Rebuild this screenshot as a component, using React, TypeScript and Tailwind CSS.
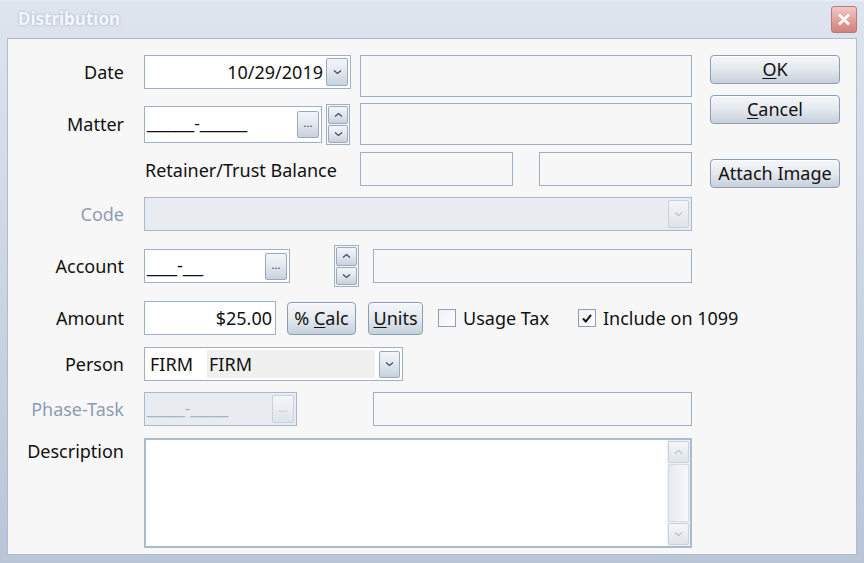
import React from "react";

const font = { fontFamily: '"Noto Sans", "Open Sans", sans-serif' };
const maskFont = { fontFamily: '"Liberation Sans", Arial, sans-serif' };

function Chevron({ dir = "down", muted = false }: { dir?: "down" | "up"; muted?: boolean }) {
  return (
    <svg width="9" height="6" viewBox="0 0 9 6" className="block">
      <path
        d={dir === "down" ? "M1 1.5 L4.5 4.5 L8 1.5" : "M1 4.5 L4.5 1.5 L8 4.5"}
        fill="none"
        stroke={muted ? "#b8c2d0" : "#3a4658"}
        strokeWidth="1.1"
      />
    </svg>
  );
}

function SmallButton({ children, muted = false, className = "" }: { children: React.ReactNode; muted?: boolean; className?: string }) {
  return (
    <div
      className={`flex items-center justify-center rounded-[2px] border ${
        muted ? "border-[#c9d1dc] bg-gradient-to-b from-[#f4f6f8] to-[#dfe4ea]" : "border-[#9aa9be] bg-gradient-to-b from-[#f3f5f8] via-[#e2e7ee] to-[#c8d1dd]"
      } ${className}`}
    >
      {children}
    </div>
  );
}

function Dots({ muted = false }: { muted?: boolean }) {
  return <span className={`text-[11px] leading-none -mt-1 ${muted ? "text-[#b0b8c4]" : "text-[#333]"}`}>...</span>;
}

function Spin({ className = "" }: { className?: string }) {
  return (
    <div className={`flex flex-col border border-[#9fb0c6] p-[1px] gap-[1px] bg-[#f7f7f7] ${className}`}>
      <SmallButton className="flex-1">
        <Chevron dir="up" />
      </SmallButton>
      <SmallButton className="flex-1">
        <Chevron dir="down" />
      </SmallButton>
    </div>
  );
}

function Box({ className = "" }: { className?: string }) {
  return <div className={`border border-[#9fb0c6] bg-[#f7f7f7] ${className}`} />;
}

function Label({ children, muted = false, top = false }: { children: React.ReactNode; muted?: boolean; top?: boolean }) {
  return (
    <div
      className={`w-[136px] shrink-0 pr-[20px] text-right text-[18px] ${muted ? "text-[#8e9cb2]" : "text-[#111]"} ${
        top ? "self-start" : "pt-[1px]"
      }`}
    >
      {children}
    </div>
  );
}

function Check({ checked = false, label }: { checked?: boolean; label: string }) {
  return (
    <div className="flex items-center gap-[7px] whitespace-nowrap shrink-0">
      <div className="w-[18px] h-[18px] shrink-0 border border-[#8e9fb8] bg-gradient-to-br from-[#eef1f5] to-[#fdfdfd] flex items-center justify-center">
        {checked && (
          <svg width="12" height="11" viewBox="0 0 12 11">
            <path d="M2 5.5 L4.8 8.5 L10 1.8" fill="none" stroke="#111" strokeWidth="2" />
          </svg>
        )}
      </div>
      <span className="text-[18px] text-[#111]">{label}</span>
    </div>
  );
}

function PushButton({ children, className = "" }: { children: React.ReactNode; className?: string }) {
  return (
    <div
      className={`flex items-center justify-center whitespace-nowrap rounded-[4px] border border-[#8c9cb4] bg-gradient-to-b from-[#f5f7fa] via-[#e4e9ef] to-[#c6cfdb] text-[18px] text-[#111] shadow-[inset_0_1px_0_#fff] ${className}`}
    >
      {children}
    </div>
  );
}

export default function App() {
  return (
    <div style={font} className="w-[864px] h-[563px] bg-gradient-to-b from-[#dfe5ee] to-[#b9c5d6] flex flex-col overflow-hidden">
      {/* Title bar */}
      <div className="h-[38px] shrink-0 flex items-start justify-between pl-[18px] pr-[7px] border-t border-[#e8edf3]">
        <div className="pt-[5px] text-[17px] font-bold text-[#f4f6f9] [text-shadow:0_0_3px_#9fb0c6]">Distribution</div>
        <div className="mt-[5px] w-[26px] h-[27px] rounded-[3px] border border-[#b07c7c] bg-gradient-to-b from-[#f2c9c6] via-[#e3a19d] to-[#d3807b] flex items-center justify-center">
          <svg width="14" height="13" viewBox="0 0 14 13">
            <path d="M2 1.5 L12 11.5 M12 1.5 L2 11.5" stroke="#fff" strokeWidth="2.6" />
          </svg>
        </div>
      </div>

      {/* Client area */}
      <div className="mx-[7px] h-[517px] bg-[#f7f7f7] border border-[#aebbd0] flex">
        <div className="w-[685px] shrink-0 flex flex-col pt-[16px] *:*:shrink-0">
          {/* Date */}
          <div className="flex items-start h-[42px]">
            <div className="h-[34px] flex items-center">
              <Label>Date</Label>
            </div>
            <div className="w-[207px] h-[34px] border border-[#9fb0c6] bg-white flex items-center justify-end pr-[2px] gap-[3px]">
              <span className="text-[18px] text-[#111]">10/29/2019</span>
              <SmallButton className="w-[22px] h-[28px]">
                <Chevron />
              </SmallButton>
            </div>
            <Box className="ml-[9px] w-[332px] h-[42px]" />
          </div>

          {/* Matter */}
          <div className="flex items-center h-[42px] mt-[6px]">
            <Label>Matter</Label>
            <div className="w-[178px] h-[37px] border border-[#9fb0c6] bg-white flex items-center justify-between pl-[2px] pr-[2px]">
              <span style={maskFont} className="text-[17px] text-[#111]">_____-_____</span>
              <SmallButton className="w-[22px] h-[27px]">
                <Dots />
              </SmallButton>
            </div>
            <Spin className="ml-[4px] w-[24px] h-[41px]" />
            <Box className="ml-[10px] w-[332px] h-[42px]" />
          </div>

          {/* Retainer */}
          <div className="flex items-center h-[34px] mt-[7px]">
            <div className="w-[136px]" />
            <span className="ml-[1px] w-[215px] pt-[2px] text-[18px] text-[#111] whitespace-nowrap">Retainer/Trust Balance</span>
            <Box className="w-[153px] h-[34px]" />
            <Box className="ml-[26px] w-[153px] h-[34px]" />
          </div>

          {/* Code */}
          <div className="flex items-center h-[34px] mt-[11px]">
            <Label muted>Code</Label>
            <div className="w-[548px] h-[34px] border border-[#a9b8cc] bg-[#e8ebef] flex items-center justify-end pr-[2px]">
              <SmallButton muted className="w-[21px] h-[28px]">
                <Chevron muted />
              </SmallButton>
            </div>
          </div>

          {/* Account */}
          <div className="flex items-center h-[42px] mt-[14px]">
            <Label>Account</Label>
            <div className="w-[146px] h-[34px] border border-[#9fb0c6] bg-white flex items-center justify-between pl-[2px] pr-[2px]">
              <span style={maskFont} className="text-[18px] text-[#111]">___-__</span>
              <SmallButton className="w-[22px] h-[27px]">
                <Dots />
              </SmallButton>
            </div>
            <Spin className="ml-[44px] w-[25px] h-[42px]" />
            <Box className="ml-[14px] w-[319px] h-[34px]" />
          </div>

          {/* Amount */}
          <div className="flex items-center h-[34px] mt-[14px]">
            <Label>Amount</Label>
            <div className="w-[132px] h-[34px] border border-[#9fb0c6] bg-white flex items-center justify-end pr-[3px]">
              <span className="text-[18px] text-[#111]">$25.00</span>
            </div>
            <PushButton className="ml-[11px] w-[69px] h-[33px]">
              <span>
                % <span className="underline underline-offset-2">C</span>alc
              </span>
            </PushButton>
            <PushButton className="ml-[12px] w-[55px] h-[33px]">
              <span>
                <span className="underline underline-offset-2">U</span>nits
              </span>
            </PushButton>
            <div className="ml-[15px]">
              <Check label="Usage Tax" />
            </div>
            <div className="ml-[29px]">
              <Check checked label="Include on 1099" />
            </div>
          </div>

          {/* Person */}
          <div className="flex items-center h-[34px] mt-[12px]">
            <Label>Person</Label>
            <div className="w-[259px] h-[34px] border border-[#9fb0c6] bg-white flex items-stretch p-[2px]">
              <span className="w-[60px] flex items-center pl-[3px] text-[18px] text-[#111]">FIRM</span>
              <span className="w-[168px] flex items-center pl-[2px] bg-[#f0f0f0] text-[18px] text-[#111]">FIRM</span>
              <div className="flex-1 flex items-center justify-end">
                <SmallButton className="w-[21px] h-[27px]">
                  <Chevron />
                </SmallButton>
              </div>
            </div>
          </div>

          {/* Phase-Task */}
          <div className="flex items-center h-[34px] mt-[11px]">
            <Label muted>Phase-Task</Label>
            <div className="w-[153px] h-[34px] border border-[#a9b8cc] bg-[#e8ebef] flex items-center justify-between pl-[2px] pr-[2px]">
              <span style={maskFont} className="text-[17px] text-[#a9b4c4]">____-____</span>
              <SmallButton muted className="w-[22px] h-[28px]">
                <Dots muted />
              </SmallButton>
            </div>
            <Box className="ml-[76px] w-[319px] h-[34px]" />
          </div>

          {/* Description */}
          <div className="flex items-start h-[110px] mt-[12px]">
            <Label top>Description</Label>
            <div className="w-[548px] h-[110px] border-2 border-[#acbacd] bg-white flex justify-end">
              <div className="w-[23px] flex flex-col p-[1px] gap-[1px] bg-[#eef1f4]">
                <SmallButton muted className="h-[22px]">
                  <Chevron dir="up" muted />
                </SmallButton>
                <div className="flex-1 border border-[#d5dce5] bg-gradient-to-r from-[#e6eaef] to-[#f6f8fa]" />
                <SmallButton muted className="h-[22px]">
                  <Chevron muted />
                </SmallButton>
              </div>
            </div>
          </div>
        </div>

        {/* Buttons */}
        <div className="flex flex-col pt-[16px] ml-[17px] w-[130px]">
          <PushButton className="h-[29px]">
            <span>
              <span className="underline underline-offset-2">O</span>K
            </span>
          </PushButton>
          <PushButton className="h-[29px] mt-[11px]">
            <span>
              <span className="underline underline-offset-2">C</span>ancel
            </span>
          </PushButton>
          <PushButton className="h-[29px] mt-[35px]">Attach Image</PushButton>
        </div>
      </div>
    </div>
  );
}
